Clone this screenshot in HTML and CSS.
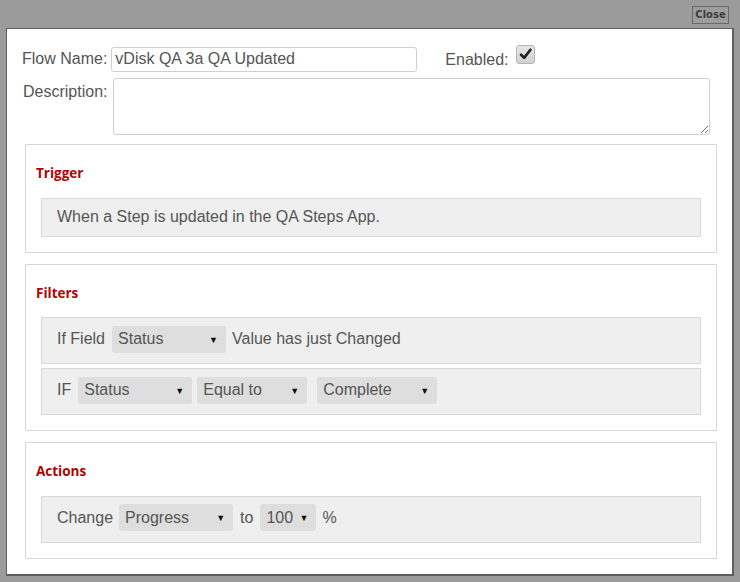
FILE: index.html
```html
<!DOCTYPE html>
<html lang="en">
<head>
<meta charset="utf-8">
<title>Flow Editor</title>
<link rel="stylesheet" href="styles.css">
</head>
<body>
<div class="topbar"><button class="close" type="button">Close</button></div>
<div class="panel">
  <div class="row-top">
    <label class="lbl">Flow Name:</label>
    <input class="name" type="text" value="vDisk QA 3a QA Updated">
    <span class="lbl enabled">Enabled:</span>
    <span class="check"><svg width="19" height="19" viewBox="0 0 19 19"><path d="M4.5 9.8 L8 13.2 L15 4.2" fill="none" stroke="#222" stroke-width="3" stroke-linecap="round" stroke-linejoin="round"/></svg></span>
  </div>
  <div class="row-desc">
    <label class="lbl desc-lbl">Description:</label>
    <textarea class="desc"></textarea>
  </div>

  <section class="box">
    <h3 class="box-title">Trigger</h3>
    <div class="line line-text">When a Step is updated in the QA Steps App.</div>
  </section>

  <section class="box">
    <h3 class="box-title">Filters</h3>
    <div class="line">
      <span class="txt">If Field</span>
      <span class="sel w114 ml7"><span>Status</span><span class="arr">&#9660;</span></span>
      <span class="txt ml6">Value has just Changed</span>
    </div>
    <div class="line line-gap">
      <span class="txt">IF</span>
      <span class="sel w114 ml7"><span>Status</span><span class="arr">&#9660;</span></span>
      <span class="sel w110 ml5"><span>Equal to</span><span class="arr">&#9660;</span></span>
      <span class="sel w120 ml10"><span>Complete</span><span class="arr">&#9660;</span></span>
    </div>
  </section>

  <section class="box">
    <h3 class="box-title">Actions</h3>
    <div class="line">
      <span class="txt">Change</span>
      <span class="sel w114 ml6"><span>Progress</span><span class="arr">&#9660;</span></span>
      <span class="txt ml7">to</span>
      <span class="sel w56 ml7"><span>100</span><span class="arr">&#9660;</span></span>
      <span class="txt ml6">%</span>
    </div>
  </section>
</div>
</body>
</html>
```

FILE: styles.css
```css
html, body {
  margin: 0;
  padding: 0;
}
body {
  background: #9b9b9b;
  width: 740px;
  height: 582px;
  overflow: hidden;
  font-family: "Liberation Sans", Arial, sans-serif;
  font-size: 16px;
  color: #555;
}
.topbar {
  height: 28px;
  display: flex;
  justify-content: flex-end;
  align-items: flex-start;
  padding-right: 11px;
  box-sizing: border-box;
  padding-top: 6px;
}
.close {
  width: 37px;
  height: 18px;
  padding: 0;
  border: 1px solid #6a6a6a;
  background: #9d9d9d;
  color: #3f3f3f;
  font-family: "DejaVu Sans", Verdana, sans-serif;
  font-weight: bold;
  font-size: 10px;
  line-height: 16px;
}
.panel {
  margin: 0 6px 0 6px;
  height: 548px;
  box-sizing: border-box;
  background: #fff;
  border: 1px solid #5e5e5e;
  border-right-width: 2px;
  border-bottom-width: 2px;
  padding: 17px 15px 0 18px;
}
.lbl {
  color: #555;
  line-height: 18px;
}
.row-top {
  display: flex;
  align-items: center;
  margin-left: -3px;
  height: 26px;
}
.name {
  margin-left: 4px;
  width: 306px;
  height: 25px;
  box-sizing: border-box;
  border: 1px solid #cfcfcf;
  border-radius: 3px;
  padding: 0 3px;
  font-family: "Liberation Sans", Arial, sans-serif;
  font-size: 16px;
  color: #555;
  outline: none;
}
.enabled {
  margin-left: 28px;
  margin-top: 2px;
}
.check {
  margin-left: 7px;
  align-self: flex-start;
  margin-top: -1px;
  width: 19px;
  height: 19px;
  box-sizing: border-box;
  border: 1px solid #b5b5b5;
  border-radius: 3px;
  background: linear-gradient(#e6e6e6, #d2d2d2);
  display: flex;
  align-items: center;
  justify-content: center;
}
.check svg {
  display: block;
}
.row-desc {
  display: flex;
  align-items: flex-start;
  margin-left: -2px;
  margin-top: 6px;
}
.desc-lbl {
  padding-top: 5px;
}
.desc {
  margin: 0 0 0 6px;
  width: 597px;
  height: 57px;
  box-sizing: border-box;
  border: 1px solid #cfcfcf;
  border-radius: 3px;
  resize: both;
  display: block;
}
.box {
  margin-top: 9px;
  border: 1px solid #d6d6d6;
  padding: 18px 15px 15px 15px;
}
.box + .box {
  margin-top: 11px;
}
.box-title {
  margin: 0 0 14.5px -5px;
  font-family: "Open Sans", "DejaVu Sans", sans-serif;
  font-weight: 700;
  font-size: 13.5px;
  line-height: 20px;
  color: #b30000;
}
.line {
  height: 47px;
  box-sizing: border-box;
  background: #efefef;
  border: 1px solid #d9d9d9;
  display: flex;
  align-items: center;
  padding-left: 15px;
  padding-bottom: 3px;
}
.line-text {
  height: 39px;
  padding-bottom: 0;
}
.line-gap {
  margin-top: 4px;
}
.txt {
  white-space: nowrap;
}
.sel {
  height: 27px;
  box-sizing: border-box;
  background: #dedede;
  border-radius: 3px;
  display: flex;
  align-items: center;
  justify-content: space-between;
  padding: 0 8px 0 6px;
  color: #555;
}
.arr {
  font-size: 9px;
  color: #111;
  margin-top: 1px;
}
.w114 { width: 114px; }
.w110 { width: 110px; }
.w120 { width: 120px; }
.w56 { width: 56px; }
.ml5 { margin-left: 5px; }
.ml6 { margin-left: 6px; }
.ml7 { margin-left: 7px; }
.ml10 { margin-left: 10px; }
```
